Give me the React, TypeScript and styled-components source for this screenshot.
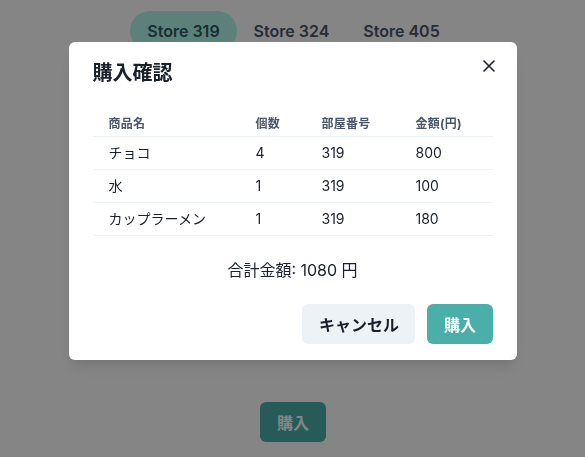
import React from "react";
import styled, { createGlobalStyle } from "styled-components";

const Global = createGlobalStyle`
  html, body { margin: 0; padding: 0; background: #ffffff; }
  body {
    font-family: "Inter", "Noto Sans CJK JP", sans-serif;
    color: #1A202C;
    width: 585px;
    height: 457px;
    overflow: hidden;
  }
  * { box-sizing: border-box; }
`;

const Page = styled.div`
  width: 585px;
  height: 457px;
  display: flex;
  flex-direction: column;
  align-items: center;
  padding-top: 11px;
`;

const TabList = styled.div`
  display: flex;
  gap: 0;
  margin-left: 2px;
`;

const Tab = styled.button<{ $active?: boolean }>`
  border: none;
  font-family: inherit;
  font-size: 16px;
  font-weight: 600;
  line-height: 24px;
  padding: 8px 17px;
  border-radius: 9999px;
  background: ${(p) => (p.$active ? "#B2F5EA" : "transparent")};
  color: ${(p) => (p.$active ? "#285E61" : "#4A5568")};
`;

const Spacer = styled.div`
  flex: 1;
`;

const BuyButton = styled.button`
  border: none;
  font-family: inherit;
  height: 40px;
  padding: 0 17px;
  border-radius: 6px;
  background: #4AAFA9;
  color: #ffffff;
  font-size: 16px;
  font-weight: 600;
  margin-bottom: 15px;
  margin-left: 1px;
`;

const Overlay = styled.div`
  position: fixed;
  inset: 0;
  background: rgba(0, 0, 0, 0.48);
  display: flex;
  justify-content: center;
  align-items: flex-start;
  padding-top: 42px;
`;

const Modal = styled.section`
  position: relative;
  width: 448px;
  background: #ffffff;
  border-radius: 6px;
  box-shadow: 0 10px 15px -3px rgba(0,0,0,0.1), 0 4px 6px -2px rgba(0,0,0,0.05);
  display: flex;
  flex-direction: column;
`;

const Header = styled.header`
  padding: 16px 24px;
  font-size: 20px;
  font-weight: 700;
  line-height: 30px;
  color: #1A202C;
`;

const Close = styled.button`
  position: absolute;
  top: 8px;
  right: 12px;
  width: 32px;
  height: 32px;
  border: none;
  background: transparent;
  display: flex;
  align-items: center;
  justify-content: center;
  border-radius: 6px;
  padding: 0;
`;

const Body = styled.div`
  padding: 8px 24px 6px;
  display: flex;
  flex-direction: column;
  align-items: stretch;
`;

const Table = styled.table`
  width: 100%;
  border-collapse: collapse;
  table-layout: fixed;
`;

const Th = styled.th<{ $w: number }>`
  width: ${(p) => p.$w}px;
  text-align: left;
  font-size: 12px;
  font-weight: 700;
  color: #4A5568;
  line-height: 16px;
  padding: 4px 16px 4px 16px;
  border-bottom: 1px solid #EDF2F7;
  letter-spacing: 0.02em;
  white-space: nowrap;
`;

const Td = styled.td`
  font-size: 14px;
  color: #1A202C;
  line-height: 16px;
  padding: 8px 16px;
  border-bottom: 1px solid #EDF2F7;
  white-space: nowrap;
`;

const Total = styled.p`
  margin: 22px 0 0;
  text-align: center;
  font-size: 16px;
  line-height: 24px;
  color: #1A202C;
`;

const Footer = styled.footer`
  display: flex;
  justify-content: flex-end;
  gap: 12px;
  padding: 16px 24px;
`;

const FooterButton = styled.button<{ $primary?: boolean }>`
  border: none;
  font-family: inherit;
  height: 40px;
  padding: 0 ${(p) => (p.$primary ? "16.5px" : "16.5px")};
  border-radius: 6px;
  font-size: 16px;
  font-weight: 700;
  background: ${(p) => (p.$primary ? "#4AAFA9" : "#EDF2F7")};
  color: ${(p) => (p.$primary ? "#ffffff" : "#1A202C")};
`;

const rows = [
  { name: "チョコ", qty: 4, room: 319, price: 800 },
  { name: "水", qty: 1, room: 319, price: 100 },
  { name: "カップラーメン", qty: 1, room: 319, price: 180 },
];

export default function App() {
  return (
    <>
      <Global />
      <Page>
        <TabList>
          <Tab $active>Store 319</Tab>
          <Tab>Store 324</Tab>
          <Tab>Store 405</Tab>
        </TabList>
        <Spacer />
        <BuyButton>購入</BuyButton>
      </Page>
      <Overlay>
        <Modal>
          <Header>購入確認</Header>
          <Close aria-label="close">
            <svg width="12" height="12" viewBox="0 0 12 12">
              <path d="M1 1 L11 11 M11 1 L1 11" stroke="#1A202C" strokeWidth="1.6" strokeLinecap="round" />
            </svg>
          </Close>
          <Body>
            <Table>
              <thead>
                <tr>
                  <Th $w={147}>商品名</Th>
                  <Th $w={66}>個数</Th>
                  <Th $w={94}>部屋番号</Th>
                  <Th $w={93}>金額(円)</Th>
                </tr>
              </thead>
              <tbody>
                {rows.map((r) => (
                  <tr key={r.name}>
                    <Td>{r.name}</Td>
                    <Td>{r.qty}</Td>
                    <Td>{r.room}</Td>
                    <Td>{r.price}</Td>
                  </tr>
                ))}
              </tbody>
            </Table>
            <Total>合計金額: 1080 円</Total>
          </Body>
          <Footer>
            <FooterButton>キャンセル</FooterButton>
            <FooterButton $primary>購入</FooterButton>
          </Footer>
        </Modal>
      </Overlay>
    </>
  );
}
